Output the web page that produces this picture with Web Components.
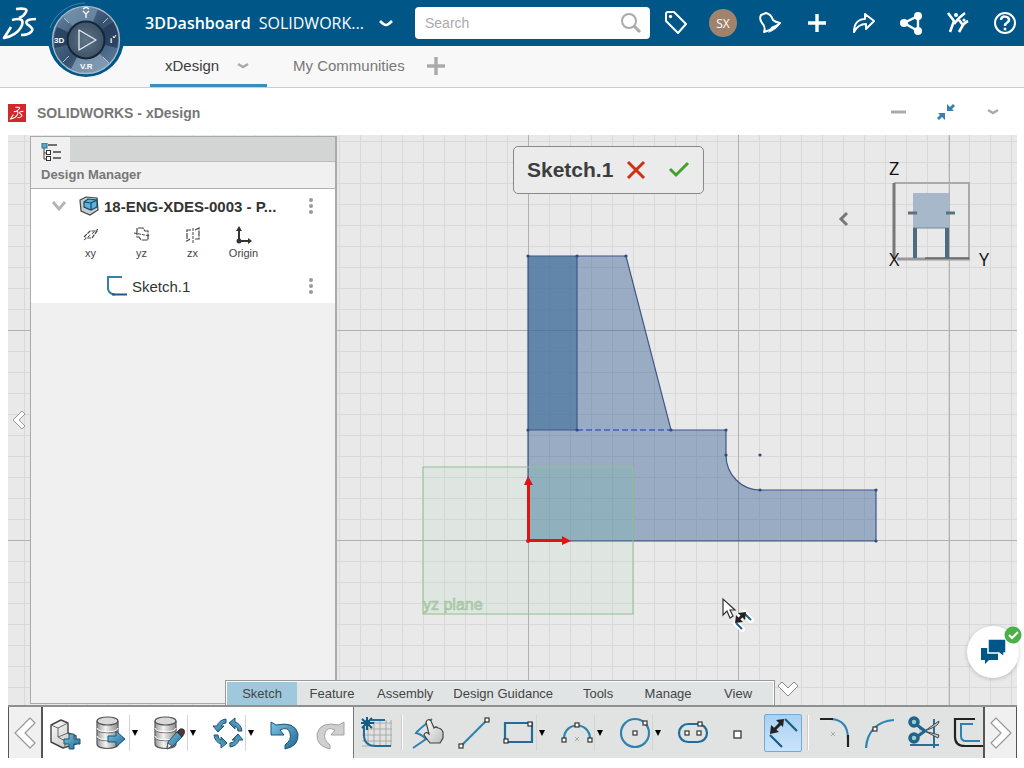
<!DOCTYPE html>
<html lang="en">
<head>
<meta charset="utf-8">
<title>3DDashboard - SOLIDWORKS xDesign</title>
<style>
  html, body { height: 100%; margin: 0; }
  body { font-family: "Liberation Sans", Arial, sans-serif; background: #fff; color: #3d3d3d; overflow: hidden; }
</style>
</head>
<body>
<xd-app></xd-app>

<script>
// Rules every component starts from
const base = `
  :host, * { box-sizing: border-box; }
  button, input { font: inherit; color: inherit; background: none; border: 0; padding: 0; margin: 0; }
  button { cursor: pointer; display: flex; align-items: center; justify-content: center; }
  a { color: inherit; text-decoration: none; }
`;

// Gradients shared by the toolbar icons
const defs = `
  <defs>
    <linearGradient id="steel" x1="0" x2="1"><stop offset="0" stop-color="#9a9a9a"/><stop offset=".4" stop-color="#f2f2f2"/><stop offset="1" stop-color="#8d8d8d"/></linearGradient>
    <linearGradient id="blue" x1="0" y1="0" x2="1" y2="1"><stop offset="0" stop-color="#7cc4e4"/><stop offset="1" stop-color="#21688f"/></linearGradient>
    <linearGradient id="pale" x1="0" y1="0" x2="1" y2="1"><stop offset="0" stop-color="#fff"/><stop offset="1" stop-color="#bdbdbd"/></linearGradient>
    <linearGradient id="ring" x1="0" y1="0" x2="1" y2="1"><stop offset="0" stop-color="#6d8ba8"/><stop offset=".5" stop-color="#36506f"/><stop offset="1" stop-color="#6585a6"/></linearGradient>
    <radialGradient id="hub"><stop offset="0" stop-color="#5e7489"/><stop offset="1" stop-color="#3f5266"/></radialGradient>
  </defs>`;

const node = (x, y) => `<rect x="${x - 2}" y="${y - 2}" width="4" height="4" fill="#fff" stroke="#333" stroke-width="1.2"/>`;

const cylinder = `
  <path d="M3 6v23c0 6 21 6 21 0V6" fill="url(#steel)" stroke="#555" stroke-width="1.2"/>
  <path d="M3 14c0 5 21 5 21 0M3 22c0 5 21 5 21 0" fill="none" stroke="#777" stroke-width="1.2"/>
  <path d="M3 13c0 5 21 5 21 0M3 21c0 5 21 5 21 0" fill="none" stroke="#fff" stroke-width="1"/>
  <ellipse cx="13.500" cy="6" rx="10.500" ry="4" fill="#d9d9d9" stroke="#555" stroke-width="1.2"/>`;

const dsMark = `
  <path d="M16 9C24 8 28 9 26 12Q24 16 19 18"/>
  <path d="M12 20C20 18 24 19 22 25C19 33 10 37 4 38L11 27"/>
  <path d="M36 19C28 19 25 21 27 24C32 28 34 29 31 32Q28 35 21 35"/>`;

const cycleArrow = `<path d="M16 4Q9 5 7 11H3L8 17L14 11H11Q12 8 16 8Z"/>`;
const undoArrow = `<path d="M3 7V20H16L12 15Q20 11 22 18Q24 25 17 30V34Q31 31 30 19Q27 6 8 10Z"/>`;

const ICONS = {
  ds: [40, 46, `<g fill="none" stroke="#fff" stroke-width="2.600" stroke-linejoin="round">${dsMark}</g>`],
  dsTile: [18, 18, `<rect width="18" height="18" fill="#cf2a2b"/><g fill="none" stroke="#fff" stroke-width="2.600" transform="translate(1 -.3) scale(.4)">${dsMark}</g>`],
  compass: [82, 82, `
    <circle cx="41" cy="39" r="38" fill="#005686"/>
    <path d="M5 28A38 38 0 0 1 40 3" fill="none" stroke="#3d83ac" stroke-width="1"/>
    <circle cx="41" cy="40" r="33.500" fill="url(#ring)" stroke="#a9bdcb" stroke-width="1.300"/>
    <path d="M41 40L18 16A33 33 0 0 1 53 9Z" fill="#7e9cb8" opacity=".6"/>
    <path d="M41 40L65 64A33 33 0 0 1 26 69Z" fill="#9db4ca" opacity=".6"/>
    <path d="M41 40L10 48A33 33 0 0 1 12 27Z" fill="#1d3552" opacity=".7"/>
    <path d="M41 40L72 48A33 33 0 0 0 68 22Z" fill="#1d3552" opacity=".7"/>
    <path d="M19 18l5 5M58 23l5-5M18 62l6-6M58 57l6 6" stroke="#b3c7d8"/>
    <circle cx="41" cy="40" r="18.500" fill="url(#hub)" stroke="#14283c" stroke-width="2"/>
    <path d="M34 30v20l17-10z" fill="none" stroke="#e3ebf1" stroke-width="1.300" stroke-linejoin="round"/>
    <path d="M38 11l3 3 3-3M41 14v4M38 9q3-3 6 0" fill="none" stroke="#fff" stroke-width="1.300"/>
    <g fill="#fff" font-family="Liberation Sans, sans-serif" font-weight="bold" font-size="8">
      <text x="9" y="43">3D</text><text x="65" y="43">i</text><text x="35" y="69">V.R</text>
    </g>
    <path d="M68 36l1 2 2-3" fill="none" stroke="#fff"/>`],
  chevron: [16, 8, `<path d="M2 2Q6 6 8 6Q10 6 14 2" fill="none" stroke="currentColor" stroke-width="2.600"/>`],
  smallChevron: [12, 8, `<path d="M1 2L6 5L11 2" fill="none" stroke="currentColor" stroke-width="2.500"/>`],
  search: [22, 22, `<circle cx="9" cy="9" r="7" fill="none" stroke="#aaa" stroke-width="2"/><path d="M14 14l6 6" stroke="#aaa" stroke-width="3"/>`],
  tag: [24, 24, `<path d="M2 3Q2 1 4 1H10L22 13L14 22L2 10Z" fill="none" stroke="#fff" stroke-width="2" stroke-linejoin="round"/><circle cx="6.500" cy="5.500" r="1.700" fill="#fff"/>`],
  bell: [24, 24, `<path d="M3 4L8 2Q13 3 15 9Q17 11 22 12Q17 18 6 21Q8 16 4 12Q1 8 3 4Z" fill="none" stroke="#fff" stroke-width="2" stroke-linejoin="round"/><path d="M13 16L22 12Q20 18 10 22Q13 19 13 16Z" fill="#fff"/>`],
  plus: [22, 22, `<path d="M11 2v18M2 11h18" stroke="currentColor" stroke-width="3.400"/>`],
  share: [24, 24, `<path d="M2 21C2 13 6 8 13 8V3L22 10L14 18V13C9 13 5 15 2 21Z" fill="none" stroke="#fff" stroke-width="2" stroke-linejoin="round"/>`],
  network: [24, 24, `<path d="M5 12L19 5V20Z" fill="none" stroke="#fff" stroke-width="2.400"/><circle cx="5" cy="12" r="4" fill="#fff"/><circle cx="19" cy="5" r="4" fill="#fff"/><circle cx="19" cy="20" r="4" fill="#fff"/>`],
  people: [24, 24, `<path d="M2 2L8 10L4 21M19 2Q12 7 8 13M13 9L17 14L13 21M22 10Q18 12 16 15" fill="none" stroke="#fff" stroke-width="2.600"/><circle cx="10" cy="4" r="2" fill="#fff"/><circle cx="18" cy="9" r="1.600" fill="#fff"/>`],
  help: [24, 24, `<circle cx="12" cy="12" r="10" fill="none" stroke="#fff" stroke-width="2"/><path d="M8 9C8 4 16 5 16 9C16 12 12 11 12 15" fill="none" stroke="#fff" stroke-width="2.500"/><circle cx="12" cy="18" r="1.500" fill="#fff"/>`],
  minus: [16, 16, `<path d="M0 8h15" stroke="#aaa" stroke-width="3"/>`],
  shrink: [18, 18, `<g fill="#3681b3"><path d="M10 1v7h7l-2-2 3-3-2-2-3 3z"/><path d="M8 17v-7H1l2 2-3 3 2 2 3-3z"/></g>`],
  tree: [20, 20, `<path d="M3 4v12h3M3 10h3" fill="none" stroke="#444"/><path d="M7 2h9M12 9h8M12 15h8" stroke="#444" stroke-width="1.600"/><rect x="5.500" y="7.500" width="4" height="4" fill="#fff" stroke="#333"/><rect x="5.500" y="13.500" width="4" height="4" fill="#fff" stroke="#333"/><rect x="1" y="0" width="5" height="5" fill="#57a9d1" stroke="#2b6f94"/>`],
  part: [20, 20, `<path d="M1 4L7 1L18 2L19 14L11 19L2 15Z" fill="#c9cdd0" stroke="#444" stroke-width="1.200"/><path d="M5 6L9 3L18 4V11L12 14L5 11Z" fill="#5fb1d6" stroke="#114a6b" stroke-width="1.200"/><path d="M5 6L12 7V14M12 7L18 4" fill="none" stroke="#114a6b" stroke-width="1.200"/>`],
  treeChevron: [16, 14, `<path d="M2 3L8 10L14 3" fill="none" stroke="#b5b5b5" stroke-width="3"/>`],
  xy: [18, 18, `<path d="M2 11L8 5H15L10 12H3" fill="none" stroke="#444" stroke-width="1.200" stroke-dasharray="4 1"/><path d="M2 14L16 3" stroke="#444" stroke-dasharray="3 2"/>`],
  yz: [18, 18, `<path d="M4 8V2H10L12 5H15V14H8L6 11H4Z" fill="none" stroke="#444" stroke-width="1.200" stroke-dasharray="6 1"/><path d="M1 7L17 10" stroke="#444" stroke-dasharray="3 1"/>`],
  zx: [18, 18, `<path d="M7 4H3V15L6 13M11 4L15 2V13H11" fill="none" stroke="#444" stroke-width="1.200" stroke-dasharray="6 1"/><path d="M9 2V17" stroke="#444" stroke-dasharray="3 1"/>`],
  origin: [18, 18, `<path d="M4 3V15H14" fill="none" stroke="#333" stroke-width="2"/><path d="M1 5L4 0L7 5ZM13 12L17 15L13 18Z" fill="#333"/><circle cx="4" cy="15" r="2.500" fill="#333"/>`],
  sketch: [20, 20, `<path d="M15 1H1V13Q2 18 8 18.500" fill="none" stroke="#3583ad" stroke-width="2"/><path d="M5 18.500H20" stroke="#2c5474" stroke-width="2"/>`],
  dots: [6, 18, `<g fill="#999"><circle cx="3" cy="3" r="2"/><circle cx="3" cy="9" r="2"/><circle cx="3" cy="15" r="2"/></g>`],
  cross: [20, 20, `<path d="M2 2L18 18M18 2L2 18" stroke="#cf3014" stroke-width="3"/>`],
  check: [22, 20, `<path d="M2 9L8 15L20 3" fill="none" stroke="#45a02e" stroke-width="3"/>`],
  left: [14, 18, `<path d="M11 3L5 9L11 15" fill="none" stroke="#777" stroke-width="3"/>`],
  hollowLeft: [14, 22, `<path d="M10 1L1 10L10 19L13 16L7 10L13 4Z" fill="#fff" stroke="#999"/>`],
  bigLeft: [24, 34, `<path d="M17 2L2 17L17 32L22 27L12 17L22 7Z" fill="#fff" stroke="#999" stroke-width="1.200" stroke-linejoin="round"/>`],
  bigRight: [24, 34, `<path d="M7 2L22 17L7 32L2 27L12 17L2 7Z" fill="#fff" stroke="#999" stroke-width="1.200" stroke-linejoin="round"/>`],
  hollowDown: [22, 16, `<path d="M1 5L5 1L11 7L17 1L21 5L11 15Z" fill="#fff" stroke="#888" stroke-linejoin="round"/>`],
  caret: [8, 6, `<path d="M1 0h6L4 6z" fill="#000"/>`],
  chat: [26, 26, `<path d="M1 9H18V21H9L5 25V21H1Z" fill="#005686"/><path d="M8 0H26V14H24V18L19 14H8Z" fill="#005686" stroke="#fff" stroke-width="1.500"/>`],
  ok: [18, 18, `<circle cx="9" cy="9" r="8.500" fill="#4caf47"/><path d="M5 9l3 3 6-6" fill="none" stroke="#fff" stroke-width="2"/>`],
  newPart: [36, 36, `<path d="M2 10L12 5L19 8V18L27 21V29L14 33L2 27Z" fill="url(#pale)" stroke="#444" stroke-width="1.400" stroke-linejoin="round"/><path d="M2 10L9 13V22L16 26V33M9 13L19 8M9 22L19 18M16 26L27 21" fill="none" stroke="#666"/><path d="M20 19h5v5h6v5h-6v5h-5v-5h-5v-5h5z" fill="url(#blue)" stroke="#1c5475"/>`],
  dbOut: [36, 36, `${cylinder}<path d="M14 21h8v-5l9 8-9 8v-5h-8z" fill="url(#blue)" stroke="#1c5475"/>`],
  dbEdit: [36, 36, `${cylinder}<path d="M15 34L16 27L25 17L30 22L21 31Z" fill="url(#blue)" stroke="#1c5475"/><path d="M15 34L16 28L20 31Z" fill="#eee" stroke="#555"/><path d="M25 17L28 14Q34 13 32 19L30 22Z" fill="#4c3833" stroke="#333"/>`],
  cycle: [36, 36, `<g fill="url(#blue)" stroke="#1c5475">${[0, 90, 180, 270].map(a => `<g transform="rotate(${a} 18 18)">${cycleArrow}</g>`).join("")}</g>`],
  undo: [36, 36, `<g fill="url(#blue)" stroke="#1c5475">${undoArrow}</g>`],
  redo: [36, 36, `<g fill="#d0d0d0" stroke="#a3a3a3" transform="translate(34) scale(-1 1)">${undoArrow}</g>`],
  grid: [36, 36, `<path d="M9 5V31M15 5V31M21 5V31M27 5V31M32 5V31M3 8H33M3 14H33M3 20H33M3 26H33M3 31H20" stroke="#aaa"/><path d="M5 12V20Q5 31 17 31H32M12 5H26" fill="none" stroke="#206d99" stroke-width="2"/><path d="M8 2V15M2 8H15M3 4L13 13M13 3L3 13" stroke="#135b84" stroke-width="2"/><circle cx="8" cy="8" r="3" fill="#135b84"/>`],
  freehand: [36, 36, `<path d="M2 33L15 24Q10 19 5 18Q6 16 21 4" fill="none" stroke="#2f83b0" stroke-width="2"/><path d="M15 7Q17 3 20 6L23 13Q25 11 27 13Q30 13 32 17V23L29 28H19L13 20Q14 16 18 19Z" fill="url(#pale)" stroke="#444" stroke-width="1.200"/>`],
  line: [36, 36, `<path d="M5 31L31 5" stroke="#2f83b0" stroke-width="2.200"/>${node(5, 31)}${node(31, 5)}`],
  rect: [36, 36, `<path d="M4 8H31V27H4Z" fill="none" stroke="#206d99" stroke-width="2.200"/>${node(29, 9)}${node(5, 26)}`],
  arc: [36, 36, `<path d="M5 24C5 6 31 6 31 24" fill="none" stroke="#2f83b0" stroke-width="2.200"/><path d="M16 22l4 4M20 22l-4 4" stroke="#aaa"/>${node(18, 10)}${node(5, 25)}${node(31, 25)}`],
  circle: [36, 36, `<circle cx="18" cy="18" r="14" fill="none" stroke="#2f83b0" stroke-width="2.200"/>${node(18, 18)}${node(28, 8)}`],
  slot: [36, 36, `<rect x="4" y="9" width="28" height="18" rx="9" fill="none" stroke="#206d99" stroke-width="2.200"/>${node(12, 18)}${node(24, 18)}${node(25, 9)}`],
  point: [36, 36, `<rect x="14" y="16" width="7" height="7" fill="#fff" stroke="#444" stroke-width="1.400"/>`],
  dimension: [36, 36, `<path d="M20 4L32 16M5 20L17 32" stroke="#185f86" stroke-width="2.200"/><path d="M9 15L16 8" stroke="#222" stroke-width="3"/><path d="M19 4L18 12L11 5ZM5 19L6 10L14 17Z" fill="#222"/>`],
  fillet: [36, 36, `<path d="M14 4Q31 5 31 24" fill="none" stroke="#2f83b0" stroke-width="2"/><path d="M3 4H16M31 20V32" stroke="#222" stroke-width="2.200"/><path d="M14 17l4 4M18 17l-4 4" stroke="#aaa"/>`],
  spline: [36, 36, `<path d="M4 33C5 16 16 6 32 5" fill="none" stroke="#2f83b0" stroke-width="2.200"/>${node(13, 14)}`],
  trim: [36, 36, `<path d="M27 4V33M3 30H32" stroke="#2b6f94" stroke-width="2"/><path d="M12 20L32 6Q33 11 17 16L32 20L31 23L12 13" fill="#ccc" stroke="#444"/><circle cx="7" cy="7" r="4" fill="#9cc" stroke="#20648b" stroke-width="3.500"/><circle cx="7" cy="23" r="4" fill="#9cc" stroke="#20648b" stroke-width="3.500"/><path d="M10 10L18 16L11 21" fill="none" stroke="#20648b" stroke-width="3"/>`],
  offset: [36, 36, `<path d="M23 4H3V22Q3 31 13 31H36" fill="none" stroke="#222" stroke-width="2.200"/><path d="M21 9H9V21Q9 26 14 26H28" fill="none" stroke="#2f83b0" stroke-width="2"/>`]
};

class XdIcon extends HTMLElement {
  connectedCallback() {
    const [w, h, body] = ICONS[this.getAttribute("name")];
    this.attachShadow({ mode: "open" }).innerHTML = `
      <style>:host { display: inline-flex; flex: none; } svg { display: block; }</style>
      <svg width="${w}" height="${h}" viewBox="0 0 ${w} ${h}" aria-hidden="true">${defs}${body}</svg>`;
  }
}

// Top bar: logo, compass, title, search and the platform actions
class XdTopbar extends HTMLElement {
  constructor() {
    super();
    this.attachShadow({ mode: "open" }).innerHTML = `
      <style>${base}
        :host { display: flex; align-items: center; height: 46px; background: #005686; color: #fff; padding-right: 3px; font-family: "Open Sans", "Noto Sans", sans-serif; }
        .compass { position: relative; align-self: flex-start; width: 105px; }
        .compass button { position: absolute; top: 0; left: 5px; z-index: 3; }
        .title { display: flex; align-items: center; width: 270px; font-size: 16px; white-space: nowrap; }
        .title strong { font-weight: 600; margin-right: 8px; }
        .title button { margin-left: 14px; }
        .search { display: flex; align-items: center; flex: 1; height: 32px; margin-right: 10px; padding: 0 8px 0 10px; background: #fff; border-radius: 4px; }
        input { flex: 1; min-width: 0; outline: 0; color: #444; font: 14px "Liberation Sans", sans-serif; }
        input::placeholder { color: #aaa; opacity: 1; }
        nav { display: flex; gap: 15px; }
        nav button { width: 32px; height: 32px; }
        .user { width: 28px; height: 28px; border-radius: 50%; background: #a0836d; font-size: 12px; display: flex; align-items: center; justify-content: center; }
      </style>
      <xd-icon name="ds"></xd-icon>
      <div class="compass"><button aria-label="Compass"><xd-icon name="compass"></xd-icon></button></div>
      <div class="title"><strong>3DDashboard</strong><span>SOLIDWORK...</span><button aria-label="Dashboards"><xd-icon name="chevron"></xd-icon></button></div>
      <div class="search"><input type="text" placeholder="Search" aria-label="Search"><button aria-label="Run search"><xd-icon name="search"></xd-icon></button></div>
      <nav>
        <button aria-label="Tags"><xd-icon name="tag"></xd-icon></button>
        <button aria-label="Profile"><span class="user">SX</span></button>
        <button aria-label="Notifications"><xd-icon name="bell"></xd-icon></button>
        <button aria-label="Add"><xd-icon name="plus"></xd-icon></button>
        <button aria-label="Share"><xd-icon name="share"></xd-icon></button>
        <button aria-label="Network"><xd-icon name="network"></xd-icon></button>
        <button aria-label="Communities"><xd-icon name="people"></xd-icon></button>
        <button aria-label="Help"><xd-icon name="help"></xd-icon></button>
      </nav>`;
  }
}

// Dashboard tabs under the top bar
class XdTabs extends HTMLElement {
  constructor() {
    super();
    this.attachShadow({ mode: "open" }).innerHTML = `
      <style>${base}
        :host { display: flex; height: 42px; padding-left: 150px; background: #f8f8f8; border-bottom: 1px solid #ccc; font-size: 15px; color: #777; }
        .tab, .add { display: flex; align-items: center; padding-top: 1px; border-bottom: 3px solid transparent; }
        .active { width: 117px; padding: 1px 18px 0 15px; justify-content: space-between; border-color: #3a8dbd; color: #3d3d3d; }
        .active button { color: #aaa; }
        .plain { margin-left: 26px; }
        .add { margin-left: 20px; color: #aaa; }
      </style>
      <div class="tab active"><a href="#xdesign">xDesign</a><button aria-label="Tab menu"><xd-icon name="smallChevron"></xd-icon></button></div>
      <a class="tab plain" href="#communities">My Communities</a>
      <button class="add" aria-label="Add tab"><xd-icon name="plus"></xd-icon></button>`;
  }
}

// Title row of the xDesign widget
class XdTitlebar extends HTMLElement {
  constructor() {
    super();
    this.attachShadow({ mode: "open" }).innerHTML = `
      <style>${base}
        :host { display: flex; align-items: center; height: 47px; padding: 2px 15px 0 8px; color: #777; }
        h1 { flex: 1; margin: 0 0 0 11px; font-size: 14px; }
        .tools { display: flex; gap: 15px; margin-top: -2px; }
        .tools button { width: 32px; height: 24px; color: #aaa; }
      </style>
      <xd-icon name="dsTile"></xd-icon>
      <h1>SOLIDWORKS - xDesign</h1>
      <div class="tools">
        <button aria-label="Minimize"><xd-icon name="minus"></xd-icon></button>
        <button aria-label="Restore"><xd-icon name="shrink"></xd-icon></button>
        <button aria-label="Menu"><xd-icon name="smallChevron"></xd-icon></button>
      </div>`;
  }
}

// Side panel with the feature tree
class XdDesignManager extends HTMLElement {
  constructor() {
    super();
    const plane = (icon, label) => `<button class="plane"><xd-icon name="${icon}"></xd-icon>${label}</button>`;
    this.attachShadow({ mode: "open" }).innerHTML = `
      <style>${base}
        :host { display: flex; flex-direction: column; background: #f0f0f0; border: 1px solid #aaa; border-width: 1px 2px 1px 1px; }
        .tabs { display: flex; height: 25px; background: #d2d5d4; border-bottom: 1px solid #b9bcbb; }
        .tabs button { width: 39px; height: 25px; background: #f0f0f0; padding-top: 6px; }
        h2 { margin: 0; padding: 5px 10px; font-size: 13px; line-height: 16px; color: #777; border-bottom: 1px solid #b3b3b3; }
        .tree { background: #fff; color: #333; }
        .row { display: flex; align-items: center; height: 34px; padding: 0 21px 0 20px; font-size: 15px; }
        .row strong, .row span { flex: 1; white-space: nowrap; }
        .row .part { margin: 0 5px 0 12px; }
        .child { padding-left: 76px; }
        .child span { margin-left: 5px; }
        .planes { display: flex; height: 46px; padding-left: 34px; }
        .plane { flex-direction: column; justify-content: flex-start; width: 51px; padding-top: 3px; gap: 3px; font-size: 11px; line-height: 13px; color: #444; }
      </style>
      <div class="tabs"><button aria-label="Tree"><xd-icon name="tree"></xd-icon></button></div>
      <h2>Design Manager</h2>
      <div class="tree">
        <div class="row">
          <button aria-label="Collapse"><xd-icon name="treeChevron"></xd-icon></button>
          <xd-icon class="part" name="part"></xd-icon><strong>18-ENG-XDES-0003 - P...</strong>
          <button aria-label="Part options"><xd-icon name="dots"></xd-icon></button>
        </div>
        <div class="planes">${plane("xy", "xy")}${plane("yz", "yz")}${plane("zx", "zx")}${plane("origin", "Origin")}</div>
        <div class="row child">
          <xd-icon name="sketch"></xd-icon><span>Sketch.1</span>
          <button aria-label="Sketch options"><xd-icon name="dots"></xd-icon></button>
        </div>
      </div>`;
  }
}

// The sketch itself: grid, profile, reference plane, origin and pointer
class XdDrawing extends HTMLElement {
  constructor() {
    super();
    const points = [[520, 121], [569, 121], [618, 121], [520, 295], [569, 295], [663, 295], [718, 295], [718, 320], [752, 320], [752, 355], [868, 355], [868, 406]];
    this.attachShadow({ mode: "open" }).innerHTML = `
      <style>
        :host { display: block; }
        svg { display: block; width: 100%; height: 100%; }
      </style>
      <svg role="img" aria-label="Sketch on the yz plane">
        <defs>
          <pattern id="minor" x="520" y="405" width="21" height="21" patternUnits="userSpaceOnUse">
            <path d="M0 0H21M0 0V21" fill="none" stroke="#d8d9d9" stroke-width="2"/>
          </pattern>
        </defs>
        <rect width="100%" height="100%" fill="#e9e9e9"/>
        <rect width="100%" height="100%" fill="url(#minor)"/>
        <g fill="#b0b0b0">
          <rect x="520" width="1" height="100%"/><rect x="730" width="1" height="100%"/><rect x="941" width="1" height="100%"/>
          <rect y="195" width="100%" height="1"/><rect y="405" width="100%" height="1"/>
        </g>
        <path d="M520 121H618L663 295H718V320A34 35 0 0 0 752 355H868V406H520Z" fill="#345d95" fill-opacity=".43"/>
        <path d="M520 121H569V295H520Z" fill="#3a6b98" fill-opacity=".58"/>
        <g fill="none" stroke="#3f5688" stroke-width="1.200">
          <path d="M520 406V121H618L663 295H718V320A34 35 0 0 0 752 355H868V406Z"/>
          <path d="M569 121V295H520"/>
          <path d="M569 295H663" stroke="#3d5fc0" stroke-width="1.600" stroke-dasharray="6 3"/>
        </g>
        <g fill="#2f4a82">${points.map(([x, y]) => `<circle cx="${x}" cy="${y}" r="1.600"/>`).join("")}</g>
        <rect x="415" y="332" width="210" height="147" fill="#70c890" fill-opacity=".08" stroke="#8fc08f"/>
        <path d="M521 333H625V405H521Z" fill="#70c8b8" fill-opacity=".12"/>
        <text x="415" y="475" font-family="Liberation Sans, sans-serif" font-size="16" fill="#b4d6b4" stroke="#a0bfa0" stroke-width=".6">yz plane</text>
        <g fill="#dd1515">
          <rect x="519" y="348" width="3" height="58"/><rect x="520" y="404" width="38" height="3"/>
          <path d="M516 350L520 341L525 350ZM554 401L563 406L554 410Z"/>
          <circle cx="520" cy="406" r="2"/>
        </g>
        <g transform="translate(714 463)">
          <path d="M1 1V17L5 13L8 20L11 18L8 12H13Z" fill="#fff" stroke="#333" stroke-width="1.200"/>
          <path d="M14 25L20 31M23 16L29 22M15 22L22 15" stroke="#fff" stroke-width="6" stroke-linecap="round"/>
          <path d="M14 25L20 31M23 16L29 22" stroke="#1f6189" stroke-width="2"/>
          <path d="M16 22L21 17" stroke="#222" stroke-width="2.500"/><path d="M24 14L23 22L16 15ZM13 25L14 17L21 24Z" fill="#222"/>
        </g>
      </svg>`;
  }
}

// Orientation preview in the corner of the drawing
class XdViewCube extends HTMLElement {
  constructor() {
    super();
    this.attachShadow({ mode: "open" }).innerHTML = `
      <style>${base}
        :host { display: flex; align-items: center; gap: 37px; }
        button { margin-top: 14px; }
      </style>
      <button aria-label="Show views"><xd-icon name="left"></xd-icon></button>
      <svg width="106" height="122" viewBox="-2 -8 106 122" role="img" aria-label="Orientation">
        <path d="M5 24H80V100" fill="none" stroke="#aaa" stroke-width="2"/>
        <path d="M5 24V100" stroke="#777" stroke-width="3"/>
        <path d="M8 100H81" stroke="#999" stroke-width="3"/><path d="M36 99H80" stroke="#444"/>
        <rect x="24" y="34" width="36" height="35" fill="#a6b8ca"/>
        <path d="M24 69H60" stroke="#768ca1"/>
        <path d="M26 69V99M58 69V99" stroke="#4f6b80" stroke-width="4"/>
        <path d="M19 54H28M57 54H66" stroke="#587183" stroke-width="3"/>
        <g font-family="Open Sans, Noto Sans, sans-serif" font-size="18" fill="#111"><text x="0" y="16">Z</text><text x="0" y="107">X</text><text x="90" y="107">Y</text></g>
      </svg>`;
  }
}

// Widget body: panel in flow, controls floating over the drawing
class XdWorkspace extends HTMLElement {
  constructor() {
    super();
    const tabs = ["Sketch", "Feature", "Assembly", "Design Guidance", "Tools", "Manage", "View"];
    this.attachShadow({ mode: "open" }).innerHTML = `
      <style>${base}
        :host { position: relative; display: flex; flex: 1; min-height: 0; border-top: 1px solid #d5d5d5; }
        xd-drawing { position: absolute; inset: -1px 0 0; }
        .gutter { position: relative; display: flex; width: 22px; justify-content: center; align-items: center; }
        xd-design-manager { position: relative; width: 307px; margin-bottom: 1px; }
        .confirm { position: absolute; left: 505px; top: 10px; display: flex; align-items: center; gap: 13px; height: 48px; padding: 0 13px; background: #ebebeb; border: 1px solid #888; border-radius: 5px; }
        .confirm strong { font-size: 21px; color: #3d3d3d; }
        .confirm .accept { margin-left: 9px; }
        xd-view-cube { position: absolute; right: 24px; top: 15px; }
        .ribbon { position: absolute; left: 217px; bottom: 0; display: flex; align-items: center; gap: 2px; }
        .tabs { display: flex; height: 25px; background: #e1e4e4; border: 1px solid #999; border-bottom: 0; box-shadow: inset 1px 1px #fff, inset -1px 0 #fff; padding: 1px 1px 0; }
        .tabs button { min-width: 70px; padding: 0 10px 1px; font-size: 13px; color: #444; }
        .tabs .active { background: #a0c8dc; }
        .more { padding-bottom: 7px; }
        .chat { position: absolute; right: -2px; bottom: 27px; width: 52px; height: 52px; border-radius: 50%; background: #fff; box-shadow: 0 1px 4px #0003; }
        .chat .ok { position: absolute; right: -3px; top: 0; }
      </style>
      <xd-drawing></xd-drawing>
      <div class="gutter"><button aria-label="Hide panel"><xd-icon name="hollowLeft"></xd-icon></button></div>
      <xd-design-manager></xd-design-manager>
      <div class="confirm"><strong>Sketch.1</strong><button aria-label="Cancel"><xd-icon name="cross"></xd-icon></button><button class="accept" aria-label="Accept"><xd-icon name="check"></xd-icon></button></div>
      <xd-view-cube></xd-view-cube>
      <div class="ribbon">
        <div class="tabs">${tabs.map((t, i) => `<button class="${i ? "" : "active"}">${t}</button>`).join("")}</div>
        <button class="more" aria-label="Hide toolbar"><xd-icon name="hollowDown"></xd-icon></button>
      </div>
      <button class="chat" aria-label="Chat"><xd-icon name="chat"></xd-icon><xd-icon class="ok" name="ok"></xd-icon></button>`;
  }
}

// One toolbar command; the "split" attribute adds a drop-down arrow
class XdTool extends HTMLElement {
  connectedCallback() {
    const icon = this.getAttribute("icon");
    this.attachShadow({ mode: "open" }).innerHTML = `
      <style>${base}
        :host { display: flex; flex: none; align-items: center; justify-content: center; width: 45px; }
        :host([split]) { width: 58px; justify-content: flex-start; padding-left: 4px; }
        .main { width: 38px; height: 38px; border: 1px solid transparent; border-radius: 2px; }
        :host([pressed]) .main { background: linear-gradient(#a9d0f2, #c9e4fb); border-color: #76a9d6; }
        .drop { width: 11px; height: 36px; margin-left: -2px; border-left: 1px solid #d4d4d4; }
      </style>
      <button class="main" aria-label="${icon}"><xd-icon name="${icon}"></xd-icon></button>
      ${this.hasAttribute("split") ? `<button class="drop" aria-label="${icon} options"><xd-icon name="caret"></xd-icon></button>` : ""}`;
  }
}

class XdToolbar extends HTMLElement {
  constructor() {
    super();
    this.attachShadow({ mode: "open" }).innerHTML = `
      <style>${base}
        :host { display: flex; height: 53px; border-top: 2px solid #8f9191; }
        .scroll { flex: none; width: 35px; background: #f0f0f0; border: solid #555; border-width: 0 2px 0 1px; }
        .scroll.next { width: 34px; border-width: 0 1px 0 2px; }
        .group { display: flex; padding-left: 1px; }
        .sketch { flex: 1; min-width: 0; overflow: hidden; background: #e1e3e3; border-left: 1px solid #777; padding-left: 0; }
        .sep { flex: none; width: 1px; margin: 8px 3px; background: #fff; box-shadow: -1px 0 #ccc; }
      </style>
      <button class="scroll" aria-label="Scroll left"><xd-icon name="bigLeft"></xd-icon></button>
      <div class="group">
        <xd-tool icon="newPart"></xd-tool><xd-tool icon="dbOut" split></xd-tool><xd-tool icon="dbEdit" split></xd-tool>
        <xd-tool icon="cycle" split></xd-tool><xd-tool icon="undo"></xd-tool><xd-tool icon="redo"></xd-tool>
      </div>
      <div class="group sketch">
        <xd-tool icon="grid"></xd-tool><div class="sep"></div>
        <xd-tool icon="freehand"></xd-tool><xd-tool icon="line"></xd-tool><xd-tool icon="rect" split></xd-tool>
        <xd-tool icon="arc" split></xd-tool><xd-tool icon="circle" split></xd-tool><xd-tool icon="slot"></xd-tool>
        <xd-tool icon="point"></xd-tool><xd-tool icon="dimension" pressed></xd-tool><div class="sep"></div>
        <xd-tool icon="fillet"></xd-tool><xd-tool icon="spline"></xd-tool><xd-tool icon="trim"></xd-tool><xd-tool icon="offset"></xd-tool>
      </div>
      <button class="scroll next" aria-label="Scroll right"><xd-icon name="bigRight"></xd-icon></button>`;
  }
}

class XdApp extends HTMLElement {
  constructor() {
    super();
    this.attachShadow({ mode: "open" }).innerHTML = `
      <style>
        :host { display: flex; flex-direction: column; height: 100vh; }
        main { display: flex; flex-direction: column; flex: 1; min-height: 0; margin: 0 7px 10px 8px; }
      </style>
      <xd-topbar></xd-topbar>
      <xd-tabs></xd-tabs>
      <xd-titlebar></xd-titlebar>
      <main>
        <xd-workspace></xd-workspace>
        <xd-toolbar></xd-toolbar>
      </main>`;
  }
}

customElements.define("xd-icon", XdIcon);
customElements.define("xd-topbar", XdTopbar);
customElements.define("xd-tabs", XdTabs);
customElements.define("xd-titlebar", XdTitlebar);
customElements.define("xd-design-manager", XdDesignManager);
customElements.define("xd-drawing", XdDrawing);
customElements.define("xd-view-cube", XdViewCube);
customElements.define("xd-workspace", XdWorkspace);
customElements.define("xd-tool", XdTool);
customElements.define("xd-toolbar", XdToolbar);
customElements.define("xd-app", XdApp);
</script>
</body>
</html>
